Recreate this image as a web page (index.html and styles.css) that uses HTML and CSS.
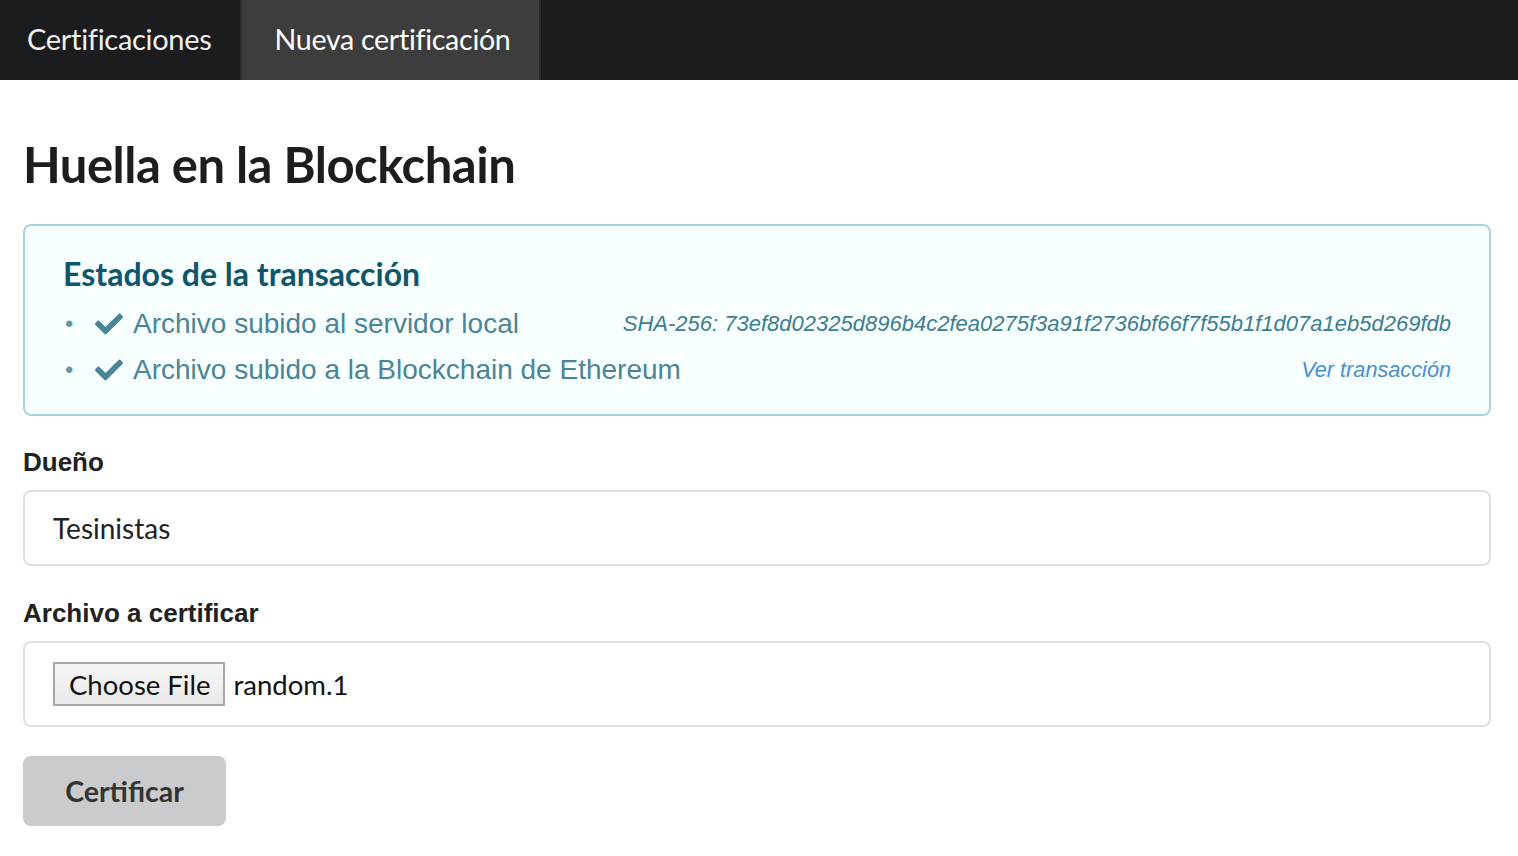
FILE: index.html
```html
<!DOCTYPE html>
<html lang="es">
<head>
<meta charset="utf-8">
<title>Nueva certificación</title>
<link rel="stylesheet" href="styles.css">
</head>
<body>
<nav class="topbar">
  <a class="nav-item">Certificaciones</a>
  <a class="nav-item active">Nueva certificación</a>
</nav>
<main class="content">
  <h1 class="title">Huella en la Blockchain</h1>
  <section class="message">
    <h2 class="msg-header">Estados de la transacción</h2>
    <ul class="status-list">
      <li class="status-item">
        <span class="status-main"><span class="bullet">•</span><svg class="check" viewBox="0 0 512 512"><path d="M173.9 439.4L7.5 273c-10-10-10-26.2 0-36.2l36.2-36.2c10-10 26.2-10 36.2 0L192 312.7 432.1 72.6c10-10 26.2-10 36.2 0l36.2 36.2c10 10 10 26.2 0 36.2L210.1 439.4c-10 10-26.2 10-36.2 0z"/></svg><span>Archivo subido al servidor local</span></span>
        <span class="hash">SHA-256: 73ef8d02325d896b4c2fea0275f3a91f2736bf66f7f55b1f1d07a1eb5d269fdb</span>
      </li>
      <li class="status-item">
        <span class="status-main"><span class="bullet">•</span><svg class="check" viewBox="0 0 512 512"><path d="M173.9 439.4L7.5 273c-10-10-10-26.2 0-36.2l36.2-36.2c10-10 26.2-10 36.2 0L192 312.7 432.1 72.6c10-10 26.2-10 36.2 0l36.2 36.2c10 10 10 26.2 0 36.2L210.1 439.4c-10 10-26.2 10-36.2 0z"/></svg><span>Archivo subido a la Blockchain de Ethereum</span></span>
        <a class="tx-link">Ver transacción</a>
      </li>
    </ul>
  </section>
  <form class="form">
    <div class="field">
      <label class="label">Dueño</label>
      <div class="input-box"><span class="input-text">Tesinistas</span></div>
    </div>
    <div class="field file-field">
      <label class="label">Archivo a certificar</label>
      <div class="input-box file-box"><span class="file-btn">Choose File</span><span class="file-name">random.1</span></div>
    </div>
    <button type="button" class="submit">Certificar</button>
  </form>
</main>
</body>
</html>
```
FILE: styles.css
```css
* { box-sizing: border-box; }
body {
  margin: 0;
  background: #ffffff;
  font-family: Lato, "Liberation Sans", sans-serif;
  color: #212121;
}
.topbar {
  display: flex;
  height: 80px;
  background: #1b1c1d;
}
.nav-item {
  display: flex;
  align-items: center;
  padding: 0 28px 3px 27px;
  font-size: 29px;
  color: #f0f0f0;
  border-right: 2px solid #2e2f30;
  letter-spacing: -0.3px;
}
.nav-item.active {
  background: #3d3d3d;
  color: #ffffff;
  padding: 0 28px 3px 33px;
  font-size: 28.6px;
  border-right: 2px solid #2a2a2a;
}
.content {
  padding: 0 27px 0 23px;
}
.title {
  margin: 60px 0 35px;
  font-size: 49px;
  font-weight: 700;
  line-height: 1;
  color: #1d1d1d;
  letter-spacing: -0.5px;
}
.message {
  background: #f8ffff;
  border: 2px solid #a9d5de;
  border-radius: 8px;
  padding: 29px 38px 21px;
}
.msg-header {
  margin: 0 0 8px;
  font-size: 32px;
  font-weight: 700;
  color: #0e566c;
  line-height: 1.2;
}
.status-list {
  list-style: none;
  margin: 0;
  padding: 0;
}
.status-item {
  display: flex;
  justify-content: space-between;
  align-items: center;
  height: 46px;
  font-family: "Liberation Sans", Arial, sans-serif;
  color: #4a8597;
}
.status-main {
  display: flex;
  align-items: center;
  font-size: 28px;
}
.bullet {
  width: 32px;
  padding-left: 2px;
  font-size: 24px;
  opacity: 0.85;
}
.check {
  width: 28px;
  height: 28px;
  fill: #4a8597;
  margin-right: 10px;
}
.hash {
  font-style: italic;
  font-size: 22px;
  color: #3d7d90;
}
.tx-link {
  font-style: italic;
  font-size: 21.7px;
  color: #4a8fcf;
}
.form {
  margin-top: 31px;
}
.field {
  margin-bottom: 32px;
}
.file-field {
  margin-bottom: 29px;
}
.label {
  display: block;
  font-family: "Liberation Sans", Arial, sans-serif;
  font-weight: 700;
  font-size: 26px;
  color: #212121;
  margin-bottom: 12px;
}
.input-box {
  display: flex;
  align-items: center;
  height: 76px;
  border: 2px solid #e0e0e0;
  border-radius: 8px;
  padding: 0 28px;
}
.input-text {
  font-size: 28px;
  color: #222;
}
.file-box {
  height: 86px;
}
.file-btn {
  display: inline-flex;
  align-items: center;
  height: 44px;
  padding: 0 13px 0 14px;
  border: 2px solid #a8a8a8;
  background: linear-gradient(#f6f6f6, #e9e9e9);
  font-size: 27.5px;
  color: #111;
  margin-right: 8px;
}
.file-name {
  font-size: 27.5px;
  color: #111;
}
.submit {
  display: block;
  width: 203px;
  height: 70px;
  margin: 0;
  border: none;
  border-radius: 8px;
  background: #cacbcd;
  font-family: Lato, "Liberation Sans", sans-serif;
  font-weight: 700;
  font-size: 28.5px;
  color: #333;
}
```
